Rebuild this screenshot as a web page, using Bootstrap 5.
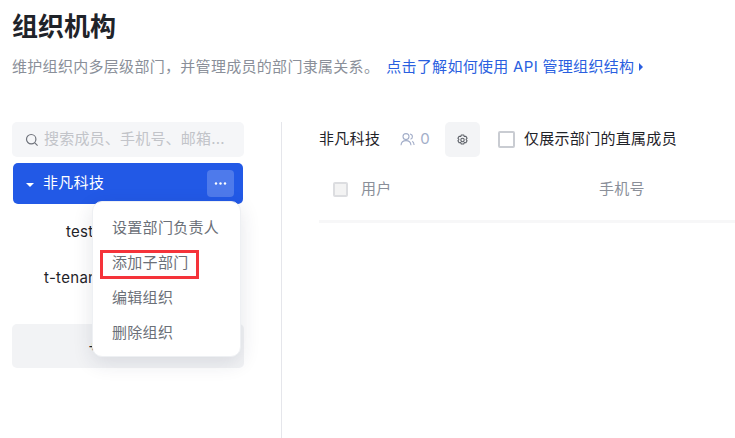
<!DOCTYPE html>
<html lang="zh">
<head>
<meta charset="utf-8">
<title>组织机构</title>
<link href="https://cdn.jsdelivr.net/npm/bootstrap@5.3.0/dist/css/bootstrap.min.css" rel="stylesheet">
<style>
html,body{height:438px;overflow:hidden}
body{font-family:"Inter","Noto Sans CJK SC",sans-serif;color:#1f2329;background:#fff;font-size:15px;letter-spacing:.3px}
.pg{padding:11px 0 0 12px}
.ttl{font-size:26px;font-weight:700;line-height:32px;margin:0;color:#1f2329;letter-spacing:0}
.sub{font-size:15px;line-height:22px;margin:13px 0 0;color:#8a8f99;white-space:nowrap}
.sub a{color:#2a5fe0;text-decoration:none;margin-left:7px}
.caret-r{display:inline-block;border-left:4px solid #2a5fe0;border-top:4px solid transparent;border-bottom:4px solid transparent;margin-left:5px;vertical-align:1px}
.cols{margin-top:44px;height:316px}
.lf{width:232px;position:relative;flex:none}
.vr-line{width:1px;background:#e5e6eb;margin:0 37px 0 37px;flex:none}
.rt{flex:1;min-width:0;overflow:hidden}
.srch{height:35px;background:#f5f6f8;border-radius:5px;padding-left:13px;color:#c2c4c9;white-space:nowrap;overflow:hidden}
.srch span{margin-left:5px;letter-spacing:.2px}
.tree-on{height:41px;margin:6px 0 0 1px;width:230px;background:#2259e6;border-radius:5px;color:#fff;padding:0 9px 0 13px}
.tri{width:0;height:0;border-top:4px solid #fff;border-left:4.5px solid transparent;border-right:4.5px solid transparent;margin-right:9px;margin-top:2px}
.more{width:27px;height:27px;border-radius:4px;background:#4e7aeb}
.node{height:46px;color:#1f2329;white-space:nowrap}
.n1{padding-left:54px;margin-top:5px;line-height:46px}
.n2{padding-left:32px;line-height:46px}
.addb{margin-top:23px;height:44px;background:#f2f3f5;border-radius:5px;padding-left:76px;color:#1f2329;line-height:44px}
.pop{position:absolute;left:80px;top:79px;width:149px;height:156px;background:#fff;border:1px solid #eef0f3;border-radius:10px;box-shadow:0 6px 20px rgba(30,40,70,.12);padding:8px 0 0 19px;color:#6b7078;z-index:5}
.pop div{height:35px;line-height:35px;white-space:nowrap}
.mark-box{position:absolute;left:88px;top:128px;width:99px;height:29px;border:3px solid #f5333a;z-index:6}
.hd{height:35px;color:#1f2329}
.cnt{color:#a3aec9;margin-left:20px}
.cnt svg{margin-right:5px}
.gear{width:35px;height:35px;background:#f3f4f6;border-radius:5px;margin-left:15px}
.cb{width:17px;height:17px;border:2px solid #c9ccd2;border-radius:2px;flex:none;margin-left:18px;margin-right:9px}
.cb2{width:15px;height:15px;border:2px solid #dcdde0;border-radius:2px;background:#f3f3f3;flex:none;margin-left:14px}
.thd{height:66px;padding-top:1px;border-bottom:3px solid #f7f7f8;color:#8a8f99;width:430px}
.c1{width:238px;margin-left:13px}
</style>
</head>
<body>
<div class="pg">
  <h1 class="ttl">组织机构</h1>
  <p class="sub">维护组织内多层级部门，并管理成员的部门隶属关系。<a href="#">点击了解如何使用 API 管理组织结构<span class="caret-r"></span></a></p>
  <div class="cols d-flex">
    <div class="lf">
      <div class="srch d-flex align-items-center">
        <svg width="14" height="14" viewBox="0 0 14 14" fill="none" stroke="#70747c" stroke-width="1.2" class="flex-shrink-0"><circle cx="6.2" cy="6.2" r="4.7"/><path d="M9.8 9.800 12.600 12.600"/></svg>
        <span>搜索成员、手机号、邮箱...</span>
      </div>
      <div class="tree-on d-flex align-items-center">
        <span class="tri"></span><span>非凡科技</span>
        <span class="more ms-auto d-flex align-items-center justify-content-center">
          <svg width="13" height="3" viewBox="0 0 13 3" fill="#fff"><circle cx="2" cy="1.5" r="1.2"/><circle cx="6.5" cy="1.5" r="1.2"/><circle cx="11" cy="1.5" r="1.2"/></svg>
        </span>
      </div>
      <div class="node n1">test</div>
      <div class="node n2">t-tenant</div>
      <div class="addb">+ 添加部门</div>
      <div class="pop">
        <div>设置部门负责人</div>
        <div>添加子部门</div>
        <div>编辑组织</div>
        <div>删除组织</div>
      </div>
      <div class="mark-box"></div>
    </div>
    <div class="vr-line"></div>
    <div class="rt">
      <div class="hd d-flex align-items-center">
        <span>非凡科技</span>
        <span class="cnt d-flex align-items-center">
          <svg width="15" height="15" viewBox="0 0 15 15" fill="none" stroke="#a3aec9" stroke-width="1.1"><circle cx="6" cy="4.6" r="3"/><path d="M1 13.2c.3-3 2.3-4.6 5-4.6s4.700 1.600 5 4.600M10 2c1.500.3 2.400 1.400 2.400 2.700 0 1.200-.7 2.200-1.900 2.600M12.300 9.300c1 .7 1.700 2 1.800 3.700"/></svg>0
        </span>
        <span class="gear d-flex align-items-center justify-content-center">
          <svg width="13" height="14" viewBox="0 0 13 14" fill="none" stroke="#5e6269" stroke-width="1.1"><path d="M5.300 1h2.400l.6 1.500 1.600-.3 1.200 2-1 1.300 1 1.300-1.200 2-1.600-.3-.6 1.500H5.300l-.6-1.500-1.600.3-1.200-2 1-1.300-1-1.300 1.200-2 1.600.3z" stroke-linejoin="round" transform="translate(0 1)"/><circle cx="6.500" cy="7" r="1.700"/></svg>
        </span>
        <span class="cb"></span>
        <span class="text-nowrap">仅展示部门的直属成员</span>
      </div>
      <div class="thd d-flex align-items-center">
        <span class="cb2"></span>
        <span class="c1">用户</span>
        <span>手机号</span>
      </div>
    </div>
  </div>
</div>
<script src="https://cdn.jsdelivr.net/npm/bootstrap@5.3.0/dist/js/bootstrap.bundle.min.js"></script>
</body>
</html>
